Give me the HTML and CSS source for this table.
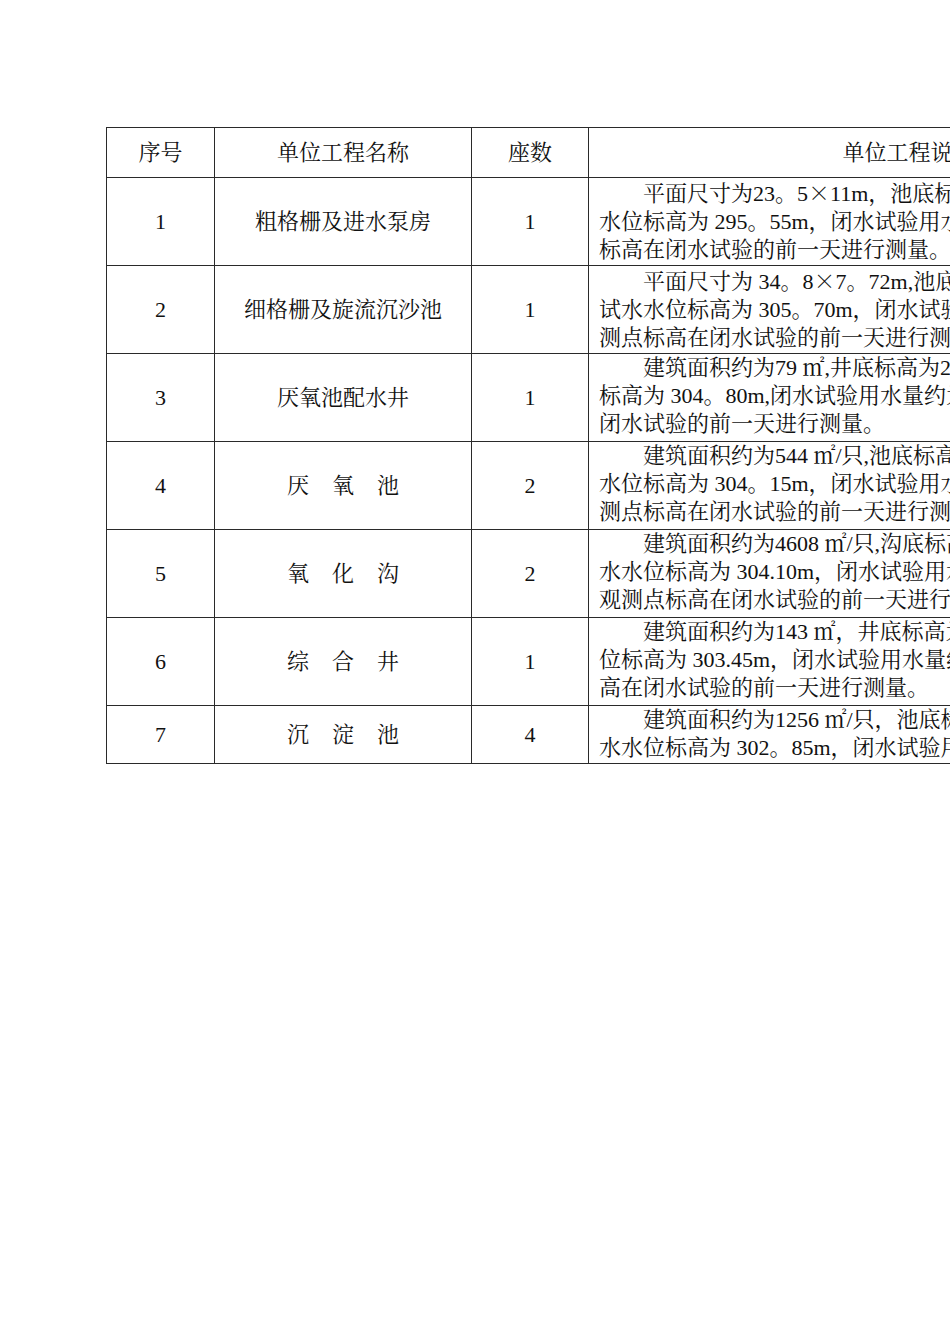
FILE: index.html
```html
<!DOCTYPE html>
<html lang="zh-CN">
<head>
<meta charset="utf-8">
<title>单位工程说明</title>
<link rel="stylesheet" href="styles.css">
</head>
<body>
<div class="page">
  <table class="works">
    <colgroup>
      <col class="c-no">
      <col class="c-name">
      <col class="c-count">
      <col class="c-desc">
    </colgroup>
    <thead>
      <tr class="row-head">
        <th>序号</th>
        <th>单位工程名称</th>
        <th>座数</th>
        <th>单位工程说明</th>
      </tr>
    </thead>
    <tbody>
      <tr class="row-3">
        <td>1</td>
        <td>粗格栅及进水泵房</td>
        <td>1</td>
        <td class="desc"><p>平面尺寸为23。5<span class="cjk">×</span>11m，池底标高为287。30m，试<br>水位标高为 295。55m，闭水试验用水量约为2200m³，观测点<br>标高在闭水试验的前一天进行测量。</p></td>
      </tr>
      <tr class="row-3">
        <td>2</td>
        <td>细格栅及旋流沉沙池</td>
        <td>1</td>
        <td class="desc"><p>平面尺寸为 34。8<span class="cjk">×</span>7。72m,池底标高为301。50m，闭<br>试水水位标高为 305。70m，闭水试验用水量约为1100m³，观<br>测点标高在闭水试验的前一天进行测量。</p></td>
      </tr>
      <tr class="row-3">
        <td>3</td>
        <td>厌氧池配水井</td>
        <td>1</td>
        <td class="desc"><p>建筑面积约为79 ㎡,井底标高为299。80m，试水水位<br>标高为 304。80m,闭水试验用水量约为400m³，观测点标高在<br>闭水试验的前一天进行测量。</p></td>
      </tr>
      <tr class="row-3">
        <td>4</td>
        <td><span class="spaced">厌氧池</span></td>
        <td>2</td>
        <td class="desc"><p>建筑面积约为544 ㎡/只,池底标高为298。15m，试水<br>水位标高为 304。15m，闭水试验用水量约为3300m³，观<br>测点标高在闭水试验的前一天进行测量。</p></td>
      </tr>
      <tr class="row-3">
        <td>5</td>
        <td><span class="spaced">氧化沟</span></td>
        <td>2</td>
        <td class="desc"><p>建筑面积约为4608 ㎡/只,沟底标高为299.60m，试<br>水水位标高为 304.10m，闭水试验用水量约为20700m³，<br>观测点标高在闭水试验的前一天进行测量。</p></td>
      </tr>
      <tr class="row-3">
        <td>6</td>
        <td><span class="spaced">综合井</span></td>
        <td>1</td>
        <td class="desc"><p>建筑面积约为143 ㎡，井底标高为297.45m，试水水<br>位标高为 303.45m，闭水试验用水量约为860m³，观测点标<br>高在闭水试验的前一天进行测量。</p></td>
      </tr>
      <tr class="row-2">
        <td>7</td>
        <td><span class="spaced">沉淀池</span></td>
        <td>4</td>
        <td class="desc"><p>建筑面积约为1256 ㎡/只，池底标高为298。35m，试<br>水水位标高为 302。85m，闭水试验用水量约为5650m³。</p></td>
      </tr>
    </tbody>
  </table>
</div>
</body>
</html>
```

FILE: styles.css
```css
html, body {
  margin: 0;
  padding: 0;
  background: #ffffff;
  overflow: hidden;
}

.page {
  width: 950px;
  height: 1344px;
  overflow: hidden;
  box-sizing: border-box;
  padding: 127px 0 0 106px;
  font-family: "Liberation Serif", "Noto Serif CJK SC", "Noto Sans CJK SC", serif;
  font-size: 22px;
  color: #111111;
}

.works {
  border-collapse: collapse;
  table-layout: fixed;
  width: 1122px;
}

.c-no { width: 108px; }
.c-name { width: 257px; }
.c-count { width: 117px; }
.c-desc { width: 640px; }

.works th,
.works td {
  border: 1px solid #2a2a2a;
  padding: 0;
  text-align: center;
  vertical-align: middle;
  font-weight: normal;
  line-height: 28px;
  white-space: nowrap;
  overflow: hidden;
}

.row-head th { height: 49px; }
.row-3 td { height: 87px; }
.row-2 td { height: 57px; }

.works td.desc {
  text-align: left;
  vertical-align: top;
  padding-left: 10px;
}

.desc p {
  margin: 0;
  text-indent: 2em;
  white-space: nowrap;
}

.cjk {
  font-family: "Noto Serif CJK SC", "Noto Sans CJK SC", serif;
}

.spaced {
  letter-spacing: 23px;
  padding-left: 23px;
}
```
